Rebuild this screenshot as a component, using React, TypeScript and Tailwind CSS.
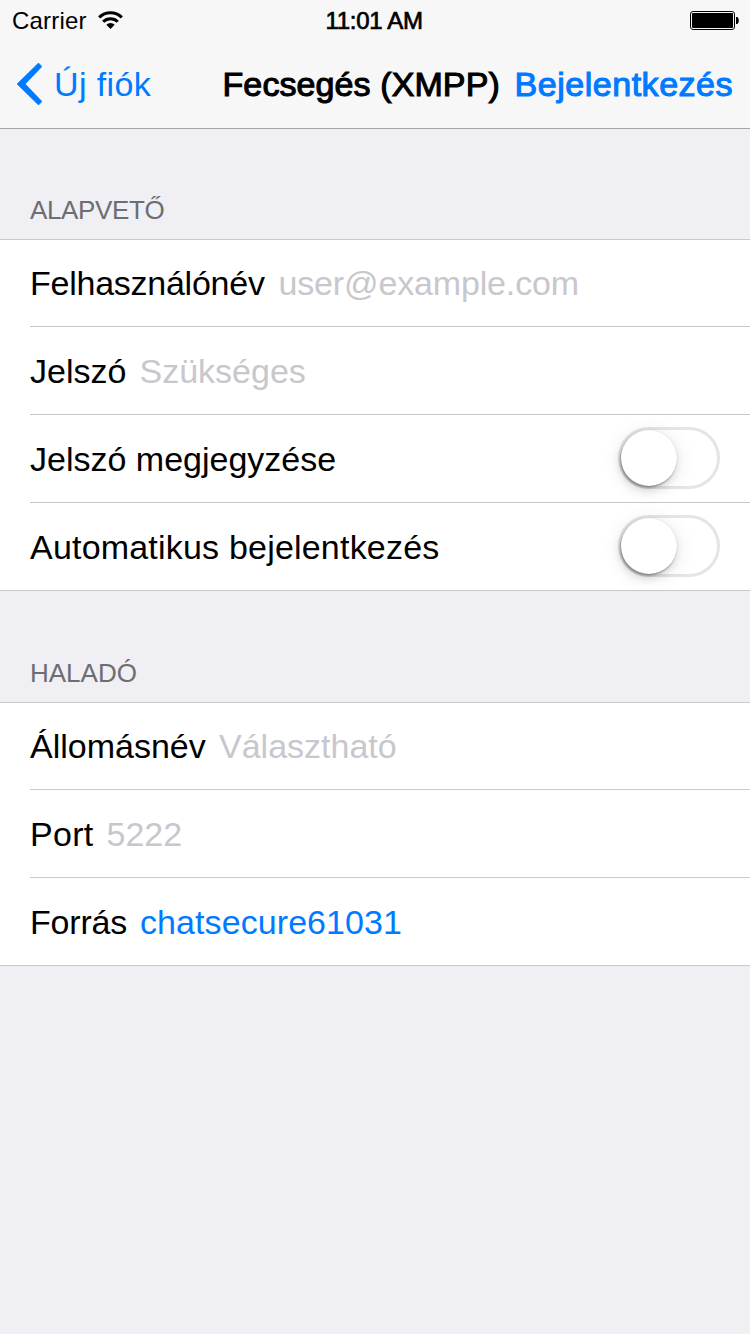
import React from "react";

function WifiIcon() {
  return (
    <svg className="ml-[11px] mt-[11px]" width="25" height="18" viewBox="0 0 25 18">
      <g fill="none" stroke="#000" strokeWidth="3">
        <path d="M1.2 6.4A16 16 0 0 1 23.8 6.4" />
        <path d="M5.2 10.7A10.3 10.3 0 0 1 19.8 10.7" />
      </g>
      <path d="M12.5 18L8.300 13.800A6 6 0 0 1 16.700 13.800Z" />
    </svg>
  );
}

function BatteryIcon() {
  return (
    <svg className="mt-[11px]" width="50" height="19" viewBox="0 0 50 19">
      <rect x="0.5" y="0.5" width="44" height="18" rx="2.6" fill="none" stroke="#000" />
      <rect x="2" y="2" width="41" height="15" rx="1" />
      <path d="M46 6h1.2c1 .6 1.6 1.8 1.6 3.500s-.6 2.900-1.600 3.500H46Z" />
    </svg>
  );
}

function Switch() {
  return (
    <div className="mt-[12px] mr-[30px] h-[62px] w-[102px] rounded-full border-[3px] border-[#e5e5e5]">
      <div className="h-[56px] w-[56px] rounded-full bg-white shadow-[0_0_1px_rgba(0,0,0,0.2),-1px_2px_2px_rgba(0,0,0,0.28),-1px_4px_8px_rgba(0,0,0,0.14),0_3px_22px_rgba(0,0,0,0.09)]" />
    </div>
  );
}

type RowProps = {
  label: string;
  labelClass?: string;
  value?: string;
  valueClass?: string;
  toggle?: boolean;
  first?: boolean;
  last?: boolean;
};

function Row({ label, labelClass = "", value, valueClass = "", toggle, first, last }: RowProps) {
  return (
    <div className={`flex items-start ${first || last ? "h-[87px]" : "h-[88px]"} ${last ? "" : "border-b border-[#c8c7cc]"}`}>
      <div className={`flex grow whitespace-nowrap leading-[88px] ${first ? "-mt-px" : ""}`}>
        <span className={`shrink-0 ${labelClass}`}>{label}</span>
        {value && <span className={valueClass}>{value}</span>}
      </div>
      {toggle && <Switch />}
    </div>
  );
}

function Section({ title, titleClass, children }: { title: string; titleClass: string; children: React.ReactNode }) {
  return (
    <section>
      <h2 className={`flex items-end pb-[14px] pl-[30px] text-[26px] leading-[30px] text-[#6d6d72] ${titleClass}`}>{title}</h2>
      <div className="border-y border-[#c8c7cc] bg-white pl-[30px] text-[34px]">{children}</div>
    </section>
  );
}

export default function App() {
  return (
    <div className="h-[1334px] w-[750px] overflow-hidden bg-[#efeff4] font-['Liberation_Sans',Arial,sans-serif] text-black">
      <header className="h-[129px] border-b border-[#a7a7aa] bg-[#f7f7f7]">
        <div className="grid h-[40px] grid-cols-[325.5px_1fr_60px] text-[24px] leading-[41px]">
          <div className="flex items-start pl-[12px]">
            <span className="tracking-[0.2px]">Carrier</span>
            <WifiIcon />
          </div>
          <span className="whitespace-nowrap tracking-[-0.3px] [-webkit-text-stroke:0.7px_#000]">11:01 AM</span>
          <BatteryIcon />
        </div>
        <div className="grid h-[88px] grid-cols-[222.5px_292px_1fr] whitespace-nowrap text-[34px] leading-[88px]">
          <div className="flex items-center pl-[17px] text-[#007aff]">
            <svg className="shrink-0" width="25" height="42" viewBox="0 0 25 42">
              <path d="M21.5 0L25 3.5L8.300 21L25 38.500L21.500 42L0 21Z" fill="#007aff" stroke="#007aff" strokeWidth="0.6" />
            </svg>
            <span className="ml-[12px] tracking-[0.4px]">Új fiók</span>
          </div>
          <h1 className="tracking-[0.1px] [-webkit-text-stroke:1.1px_#000]">Fecsegés (XMPP)</h1>
          <span className="tracking-[0.53px] text-[#007aff] [-webkit-text-stroke:1.1px_#007aff]">Bejelentkezés</span>
        </div>
      </header>
      <Section title="ALAPVETŐ" titleClass="h-[110px] tracking-[-0.35px]">
        <Row first label="Felhasználónév" labelClass="w-[248.5px] tracking-[-0.25px]" value="user@example.com" valueClass="text-[#c7c7cd] tracking-[-0.15px]" />
        <Row label="Jelszó" labelClass="w-[109.5px]" value="Szükséges" valueClass="text-[#c7c7cd]" />
        <Row label="Jelszó megjegyzése" toggle />
        <Row last label="Automatikus bejelentkezés" labelClass="tracking-[0.2px]" toggle />
      </Section>
      <Section title="HALADÓ" titleClass="h-[111px]">
        <Row first label="Állomásnév" labelClass="w-[189px]" value="Választható" valueClass="text-[#c7c7cd]" />
        <Row label="Port" labelClass="w-[76.5px] tracking-[0.3px]" value="5222" valueClass="text-[#c7c7cd]" />
        <Row last label="Forrás" labelClass="w-[110px] tracking-[-0.2px]" value="chatsecure61031" valueClass="text-[#007aff] tracking-[0.08px]" />
      </Section>
    </div>
  );
}
